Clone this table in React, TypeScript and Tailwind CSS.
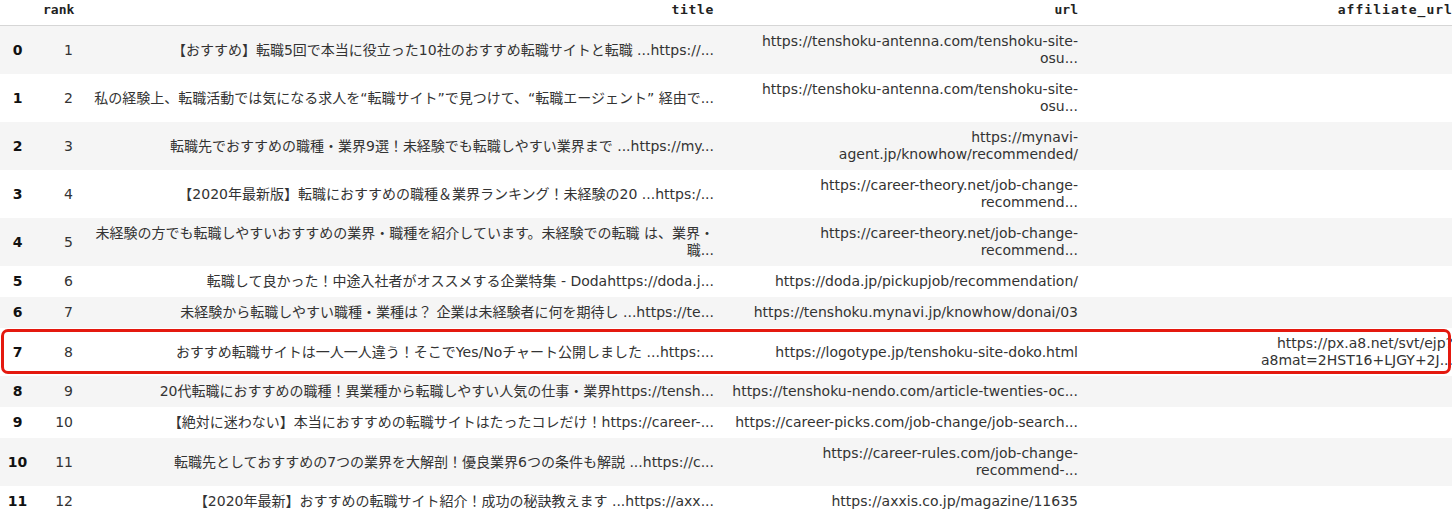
import React from "react";

type Row = {
  idx: number;
  rank: number;
  title: string[];
  url: string[];
  aff: string[];
};

const ROWS: Row[] = [
  {
    idx: 0,
    rank: 1,
    title: ["【おすすめ】転職5回で本当に役立った10社のおすすめ転職サイトと転職 ...https://..."],
    url: ["https://tenshoku-antenna.com/tenshoku-site-", "osu..."],
    aff: [],
  },
  {
    idx: 1,
    rank: 2,
    title: ["私の経験上、転職活動では気になる求人を“転職サイト”で見つけて、“転職エージェント” 経由で..."],
    url: ["https://tenshoku-antenna.com/tenshoku-site-", "osu..."],
    aff: [],
  },
  {
    idx: 2,
    rank: 3,
    title: ["転職先でおすすめの職種・業界9選！未経験でも転職しやすい業界まで ...https://my..."],
    url: ["https://mynavi-", "agent.jp/knowhow/recommended/"],
    aff: [],
  },
  {
    idx: 3,
    rank: 4,
    title: ["【2020年最新版】転職におすすめの職種＆業界ランキング！未経験の20 ...https:/..."],
    url: ["https://career-theory.net/job-change-", "recommend..."],
    aff: [],
  },
  {
    idx: 4,
    rank: 5,
    title: ["未経験の方でも転職しやすいおすすめの業界・職種を紹介しています。未経験での転職 は、業界・", "職..."],
    url: ["https://career-theory.net/job-change-", "recommend..."],
    aff: [],
  },
  {
    idx: 5,
    rank: 6,
    title: ["転職して良かった！中途入社者がオススメする企業特集 - Dodahttps://doda.j..."],
    url: ["https://doda.jp/pickupjob/recommendation/"],
    aff: [],
  },
  {
    idx: 6,
    rank: 7,
    title: ["未経験から転職しやすい職種・業種は？ 企業は未経験者に何を期待し ...https://te..."],
    url: ["https://tenshoku.mynavi.jp/knowhow/donai/03"],
    aff: [],
  },
  {
    idx: 7,
    rank: 8,
    title: ["おすすめ転職サイトは一人一人違う！そこでYes/Noチャート公開しました ...https:..."],
    url: ["https://logotype.jp/tenshoku-site-doko.html"],
    aff: ["https://px.a8.net/svt/ejp?", "a8mat=2HST16+LJGY+2J..."],
  },
  {
    idx: 8,
    rank: 9,
    title: ["20代転職におすすめの職種！異業種から転職しやすい人気の仕事・業界https://tensh..."],
    url: ["https://tenshoku-nendo.com/article-twenties-oc..."],
    aff: [],
  },
  {
    idx: 9,
    rank: 10,
    title: ["【絶対に迷わない】本当におすすめの転職サイトはたったコレだけ！https://career-..."],
    url: ["https://career-picks.com/job-change/job-search..."],
    aff: [],
  },
  {
    idx: 10,
    rank: 11,
    title: ["転職先としておすすめの7つの業界を大解剖！優良業界6つの条件も解説 ...https://c..."],
    url: ["https://career-rules.com/job-change-", "recommend-..."],
    aff: [],
  },
  {
    idx: 11,
    rank: 12,
    title: ["【2020年最新】おすすめの転職サイト紹介！成功の秘訣教えます ...https://axx..."],
    url: ["https://axxis.co.jp/magazine/11635"],
    aff: [],
  },
];

function Lines({ lines }: { lines: string[] }) {
  return (
    <>
      {lines.map((l, i) => (
        <div key={i} className="h-[17px] leading-[17px] whitespace-nowrap">
          {l}
        </div>
      ))}
    </>
  );
}

export default function App() {
  return (
    <div className="relative w-[1452px] h-[518px] overflow-hidden bg-white">
      <table className="table-fixed w-[1461px] text-[14px] text-[#333] font-['DejaVu_Sans','Noto_Sans_CJK_JP',sans-serif]">
        <colgroup>
          <col className="w-[35px]" />
          <col className="w-[46px]" />
          <col className="w-[641px]" />
          <col className="w-[364px]" />
          <col className="w-[375px]" />
        </colgroup>
        <thead>
          <tr className="border-b border-[#d6d6d6] font-['DejaVu_Sans_Mono',monospace] text-[13px] font-bold text-[#222]">
            <th className="h-[25px] p-0"></th>
            <th className="px-2 pt-[1px] pb-[7px] text-right leading-[17px]">rank</th>
            <th className="px-2 pt-[1px] pb-[7px] text-right leading-[17px] tracking-[0.05em]">title</th>
            <th className="px-2 pt-[1px] pb-[7px] text-right leading-[17px]">url</th>
            <th className="px-2 pt-[1px] pb-[7px] text-right leading-[17px] tracking-[0.08em]">affiliate_url</th>
          </tr>
        </thead>
        <tbody>
          {ROWS.map((r) => (
            <tr key={r.idx} className={r.idx % 2 === 0 ? "bg-[#f5f5f5]" : "bg-white"}>
              <td className="py-[7px] text-center align-middle font-bold text-[#111] leading-[17px]">
                {r.idx}
              </td>
              <td className="py-[7px] px-2 text-right align-middle leading-[17px]">{r.rank}</td>
              <td className="py-[7px] px-2 text-right align-middle">
                <Lines lines={r.title} />
              </td>
              <td className="py-[7px] px-2 text-right align-middle">
                <Lines lines={r.url} />
              </td>
              <td className="py-[7px] px-2 text-right align-middle">
                <Lines lines={r.aff} />
              </td>
            </tr>
          ))}
        </tbody>
      </table>
      {/* highlight box over row 7 */}
      <div className="pointer-events-none absolute left-[1px] top-[329px] h-[45px] w-[1450px] rounded-[7px] border-[3px] border-[#e4190f]" />
    </div>
  );
}
